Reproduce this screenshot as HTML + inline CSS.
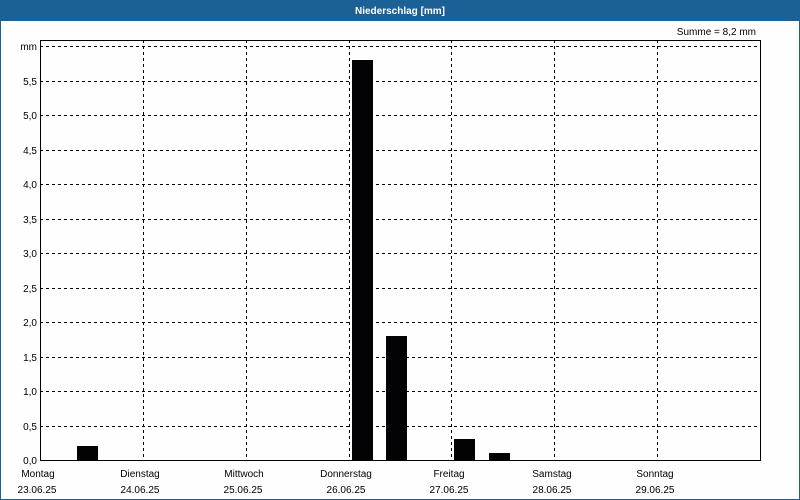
<!DOCTYPE html>
<html><head><meta charset="utf-8"><style>
html,body{margin:0;padding:0;background:#fdfefd;}
svg{display:block;font-family:"Liberation Sans","DejaVu Sans",sans-serif;}
</style></head><body>
<svg width="800" height="500" xmlns="http://www.w3.org/2000/svg">
<rect x="0" y="0" width="800" height="500" fill="#fdfefd"/>
<rect x="0" y="0" width="800" height="21" fill="#1b6195"/>
<rect x="0" y="0" width="1" height="500" fill="#1b6195"/>
<rect x="799" y="0" width="1" height="500" fill="#1b6195"/>
<rect x="0" y="499" width="800" height="1" fill="#1b6195"/>
<text x="400" y="14" text-anchor="middle" fill="#fff" font-size="10" font-weight="bold">Niederschlag [mm]</text>
<text x="756" y="35" text-anchor="end" font-size="10" fill="#000">Summe = 8,2 mm</text>
<g stroke="#000" stroke-width="1" stroke-dasharray="3,3" shape-rendering="crispEdges">
<line x1="40" y1="46.5" x2="760" y2="46.5"/>
<line x1="40" y1="81.5" x2="760" y2="81.5"/>
<line x1="40" y1="115.5" x2="760" y2="115.5"/>
<line x1="40" y1="150.5" x2="760" y2="150.5"/>
<line x1="40" y1="184.5" x2="760" y2="184.5"/>
<line x1="40" y1="219.5" x2="760" y2="219.5"/>
<line x1="40" y1="253.5" x2="760" y2="253.5"/>
<line x1="40" y1="288.5" x2="760" y2="288.5"/>
<line x1="40" y1="322.5" x2="760" y2="322.5"/>
<line x1="40" y1="357.5" x2="760" y2="357.5"/>
<line x1="40" y1="391.5" x2="760" y2="391.5"/>
<line x1="40" y1="426.5" x2="760" y2="426.5"/>
<line x1="143.5" y1="40" x2="143.5" y2="460"/>
<line x1="246.5" y1="40" x2="246.5" y2="460"/>
<line x1="349.5" y1="40" x2="349.5" y2="460"/>
<line x1="451.5" y1="40" x2="451.5" y2="460"/>
<line x1="554.5" y1="40" x2="554.5" y2="460"/>
<line x1="657.5" y1="40" x2="657.5" y2="460"/>
</g>
<g fill="#030204">
<rect x="77" y="446" width="21" height="14"/>
<rect x="352" y="60" width="21" height="400"/>
<rect x="386" y="336" width="21" height="124"/>
<rect x="454" y="439" width="21" height="21"/>
<rect x="489" y="453" width="21" height="7"/>
</g>
<rect x="40.5" y="40.5" width="720" height="420" fill="none" stroke="#000" stroke-width="1" shape-rendering="crispEdges"/>
<g font-size="10" fill="#000" text-anchor="end">
<text x="37" y="50">mm</text>
<text x="37" y="85">5,5</text>
<text x="37" y="119">5,0</text>
<text x="37" y="154">4,5</text>
<text x="37" y="188">4,0</text>
<text x="37" y="223">3,5</text>
<text x="37" y="257">3,0</text>
<text x="37" y="292">2,5</text>
<text x="37" y="326">2,0</text>
<text x="37" y="361">1,5</text>
<text x="37" y="395">1,0</text>
<text x="37" y="430">0,5</text>
<text x="37" y="464">0,0</text>
</g>
<g font-size="10" fill="#000" text-anchor="middle">
<text x="38" y="477">Montag</text><text x="37" y="493">23.06.25</text>
<text x="140" y="477">Dienstag</text><text x="140" y="493">24.06.25</text>
<text x="244" y="477">Mittwoch</text><text x="243" y="493">25.06.25</text>
<text x="346" y="477">Donnerstag</text><text x="346" y="493">26.06.25</text>
<text x="449" y="477">Freitag</text><text x="449" y="493">27.06.25</text>
<text x="552" y="477">Samstag</text><text x="552" y="493">28.06.25</text>
<text x="655" y="477">Sonntag</text><text x="655" y="493">29.06.25</text>
</g>
</svg>
</body></html>
